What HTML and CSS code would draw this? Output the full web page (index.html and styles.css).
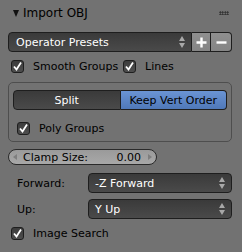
FILE: index.html
```html
<!doctype html>
<html>
    <head>
        <meta charset="utf-8">
        <title>Import OBJ</title>
        <link rel="stylesheet" href="styles.css">
    </head>
    <body>
        <section class="panel">
            <div class="panel-header">
                <span class="tri"></span>
                <span class="title">Import OBJ</span>
                <span class="grip"></span>
            </div>
            <div class="row presets">
                <div class="menu grow">
                    <span class="grow">Operator Presets</span>
                    <span class="updown"></span>
                </div>
                <div class="icon-btn">
                    <svg width="13" height="13" viewBox="0 0 13 13"><path d="M6.5 1.5v10M1.5 6.5h10" stroke="#fff" stroke-width="2.4" fill="none"/></svg>
                </div>
                <div class="icon-btn last">
                    <svg width="13" height="13" viewBox="0 0 13 13"><path d="M1.5 6.5h10" stroke="#fff" stroke-width="2.4" fill="none"/></svg>
                </div>
            </div>
            <div class="row cols">
                <label class="check"><span class="box-check"></span>Smooth Groups</label>
                <label class="check"><span class="box-check"></span>Lines</label>
            </div>
            <div class="box">
                <div class="radio">
                    <div class="radio-btn">Split</div>
                    <div class="radio-btn on">Keep Vert Order</div>
                </div>
                <label class="check inner"><span class="box-check"></span>Poly Groups</label>
            </div>
            <div class="row">
                <div class="slider">
                    <span class="arrow-l"></span>
                    <span class="grow">Clamp Size:</span>
                    <span>0.00</span>
                    <span class="arrow-r"></span>
                </div>
            </div>
            <div class="row prop forward">
                <span class="prop-label">Forward:</span>
                <div class="menu grow">
                    <span class="grow">-Z Forward</span>
                    <span class="updown"></span>
                </div>
            </div>
            <div class="row prop">
                <span class="prop-label">Up:</span>
                <div class="menu grow">
                    <span class="grow">Y Up</span>
                    <span class="updown"></span>
                </div>
            </div>
            <div class="row search">
                <label class="check"><span class="box-check"></span>Image Search</label>
            </div>
        </section>
    </body>
</html>
```

FILE: styles.css
```css
* {
    box-sizing: border-box;
}

html, body {
    margin: 0;
    padding: 0;
}

body {
    width: 242px;
    height: 252px;
    background: #727272;
    font-family: "DejaVu Sans", sans-serif;
    font-size: 11px;
    color: #000;
    overflow: hidden;
}

.panel {
    padding: 0 10px 0 8px;
}

.panel-header {
    display: flex;
    align-items: center;
    height: 26px;
    padding-left: 5px;
    font-size: 12px;
}
.tri {
    width: 0;
    height: 0;
    margin-right: 4px;
    border-left: 3.5px solid transparent;
    border-right: 3.5px solid transparent;
    border-top: 7px solid #111;
}
.title {
    flex: 1;
}
.grip {
    width: 10px;
    height: 4px;
    margin-right: 3px;
    background-image: radial-gradient(circle, #2a2a2a 0.8px, transparent 1px);
    background-size: 2.5px 2.5px;
}

.row {
    display: flex;
    align-items: center;
}
.grow {
    flex: 1;
}

.presets {
    margin-top: 6px;
    height: 20px;
}

.menu {
    display: flex;
    align-items: center;
    height: 20px;
    padding: 0 5px 0 7px;
    color: #fff;
    border: 1px solid #1e1e1e;
    border-radius: 4px;
    background: linear-gradient(#3a3a3a, #4a4a4a);
}
.presets .menu {
    border-radius: 4px 0 0 4px;
}
.updown {
    position: relative;
    width: 7px;
    height: 12px;
}
.updown::before,
.updown::after {
    content: "";
    position: absolute;
    left: 0;
    border-left: 3.5px solid transparent;
    border-right: 3.5px solid transparent;
}
.updown::before {
    top: 0;
    border-bottom: 5px solid #a8a8a8;
}
.updown::after {
    bottom: 0;
    border-top: 5px solid #a8a8a8;
}

.icon-btn {
    display: flex;
    align-items: center;
    justify-content: center;
    width: 19px;
    height: 20px;
    border: 1px solid #1e1e1e;
    border-left: none;
    background: linear-gradient(#8f8f8f, #858585);
}
.icon-btn.last {
    width: 21px;
    border-radius: 0 4px 4px 0;
}

.cols {
    height: 20px;
    margin-top: 4px;
}
.cols .check {
    flex: 1;
}

.check {
    display: flex;
    align-items: center;
    padding-left: 3px;
    height: 20px;
}
.box-check {
    width: 13px;
    height: 13px;
    margin-right: 9px;
    border: 1px solid #1e1e1e;
    border-radius: 3px;
    background-image: url("data:image/svg+xml,%3Csvg xmlns='http://www.w3.org/2000/svg' width='11' height='11'%3E%3Cpath d='M2 5.5l2.5 3 4.5-7' stroke='white' stroke-width='1.8' fill='none'/%3E%3C/svg%3E"), linear-gradient(#3c3c3c, #4e4e4e);
}

.box {
    margin-top: 6px;
    height: 60px;
    padding: 7px 4px 0 4px;
    border: 1px solid #4e4e4e;
    border-radius: 5px;
}
.radio {
    display: flex;
    height: 20px;
}
.radio-btn {
    flex: 1;
    display: flex;
    align-items: center;
    justify-content: center;
    color: #fff;
    border: 1px solid #1e1e1e;
    background: linear-gradient(#3a3a3a, #4a4a4a);
    border-radius: 4px 0 0 4px;
}
.radio-btn.on {
    color: #000;
    border-left: none;
    border-radius: 0 4px 4px 0;
    background: linear-gradient(#6a94d4, #4f78b8);
}
.check.inner {
    margin-top: 8px;
    padding-left: 4px;
}

.slider {
    display: flex;
    align-items: center;
    margin-top: 7px;
    width: 149px;
    height: 16px;
    padding: 0 4px;
    border: 1px solid #2a2a2a;
    border-radius: 8px;
    background: linear-gradient(#9a9a9a, #a8a8a8);
}
.arrow-l,
.arrow-r {
    width: 0;
    height: 0;
    border-top: 3.5px solid transparent;
    border-bottom: 3.5px solid transparent;
}
.arrow-l {
    border-right: 4px solid #7e7e7e;
    margin-right: 6px;
}
.arrow-r {
    border-left: 4px solid #7e7e7e;
    margin-left: 7px;
}

.prop {
    height: 20px;
    margin-top: 6px;
}
.prop.forward {
    margin-top: 8px;
}
.prop-label {
    width: 80px;
    padding-left: 9px;
}
.prop .menu {
    padding-left: 6px;
}

.search {
    margin-top: 4px;
}
```
